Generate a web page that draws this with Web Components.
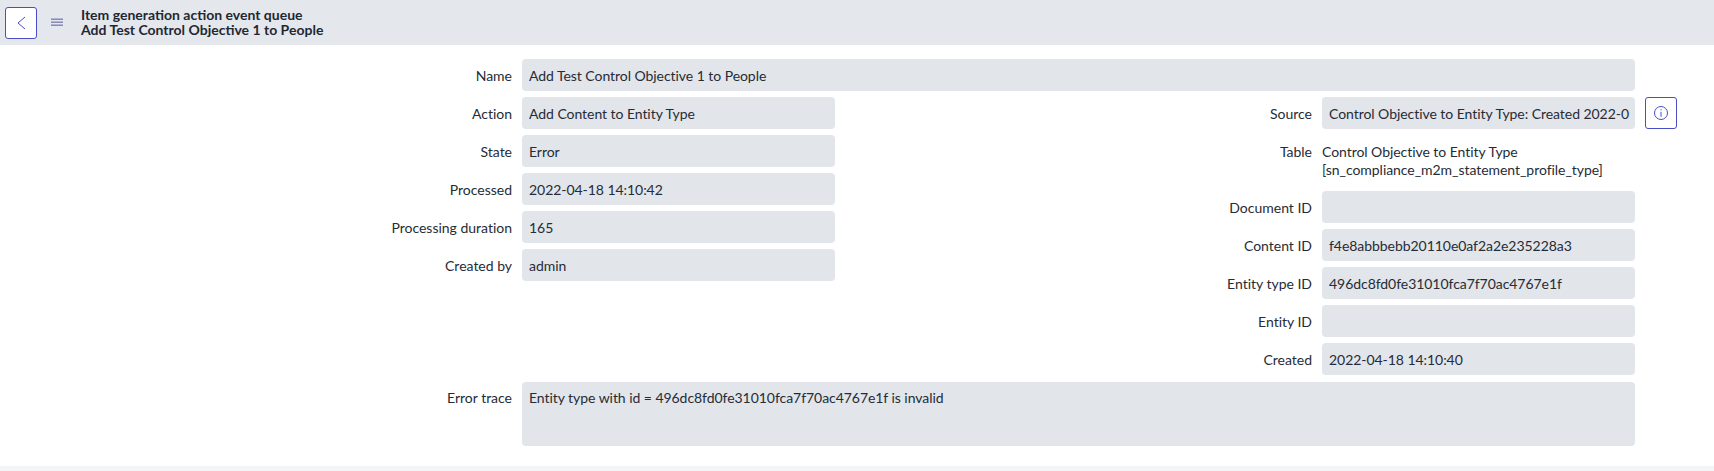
<!DOCTYPE html>
<html>
<head>
<meta charset="utf-8">
<title>Item generation action event queue</title>
<style>
  html, body { margin: 0; padding: 0; background: #f4f5f7; }
  body { font-family: Lato, "Liberation Sans", sans-serif; font-size: 14px; color: #262c36; height: 471px; overflow: hidden; }
</style>
</head>
<body>
<form-page>
  <form-header slot="header" table="Item generation action event queue" record="Add Test Control Objective 1 to People"></form-header>

  <form-field slot="top" label="Name" value="Add Test Control Objective 1 to People"></form-field>

  <form-field slot="left" label="Action" value="Add Content to Entity Type"></form-field>
  <form-field slot="left" label="State" value="Error"></form-field>
  <form-field slot="left" label="Processed" value="2022-04-18 14:10:42"></form-field>
  <form-field slot="left" label="Processing duration" value="165"></form-field>
  <form-field slot="left" label="Created by" value="admin"></form-field>

  <form-field slot="right" label="Source" value="Control Objective to Entity Type: Created 2022-0" action></form-field>
  <form-field slot="right" label="Table" plain>Control Objective to Entity Type<br>[sn_compliance_m2m_statement_profile_type]</form-field>
  <form-field slot="right" label="Document ID" value=""></form-field>
  <form-field slot="right" label="Content ID" value="f4e8abbbebb20110e0af2a2e235228a3"></form-field>
  <form-field slot="right" label="Entity type ID" value="496dc8fd0fe31010fca7f70ac4767e1f"></form-field>
  <form-field slot="right" label="Entity ID" value=""></form-field>
  <form-field slot="right" label="Created" value="2022-04-18 14:10:40"></form-field>

  <form-field slot="bottom" label="Error trace" value="Entity type with id = 496dc8fd0fe31010fca7f70ac4767e1f is invalid" tall></form-field>
</form-page>

<script>
class FormPage extends HTMLElement {
  constructor() {
    super();
    this.attachShadow({mode: 'open'}).innerHTML = `
      <style>
        :host { display: block; }
        .body { background: #fff; height: 421px; box-sizing: border-box; padding: 14px 0 0; }
        .columns { display: grid; grid-template-columns: 835px 842px; }
        .wide { width: 1677px; }
        .bottom { margin-top: 1px; }
      </style>
      <slot name="header"></slot>
      <div class="body">
        <div class="wide"><slot name="top"></slot></div>
        <div class="columns">
          <div class="left"><slot name="left"></slot></div>
          <div class="right"><slot name="right"></slot></div>
        </div>
        <div class="wide bottom"><slot name="bottom"></slot></div>
      </div>
    `;
  }
}
customElements.define('form-page', FormPage);

class FormHeader extends HTMLElement {
  constructor() {
    super();
    this.attachShadow({mode: 'open'});
  }
  connectedCallback() {
    this.shadowRoot.innerHTML = `
      <style>
        :host { display: flex; align-items: center; height: 45px; background: #e4e7eb; box-sizing: border-box; padding-left: 5px; }
        .back { width: 32px; height: 32px; box-sizing: border-box; border: 1px solid #4a4ec4; border-radius: 3px; background: #fff; display: flex; align-items: center; justify-content: center; }
        .menu { display: flex; margin-left: 14px; }
        .titles { margin-left: 18px; margin-top: -1px; font-weight: 700; font-size: 14px; line-height: 15px; color: #1f2733; }
        svg { display: block; }
      </style>
      <div class="back">
        <svg width="16" height="16" viewBox="0 0 16 16" fill="none" stroke="#4a4ec4" stroke-width="1"><path d="M12 2 L5 8 L12 14"/></svg>
      </div>
      <div class="menu">
        <svg width="12" height="10" viewBox="0 0 12 10" fill="#7f82b5"><rect y="0.5" width="12" height="1.4"/><rect y="3.5" width="12" height="1.4"/><rect y="6.5" width="12" height="1.4"/></svg>
      </div>
      <div class="titles">
        <div>${this.getAttribute('table')}</div>
        <div>${this.getAttribute('record')}</div>
      </div>
    `;
  }
}
customElements.define('form-header', FormHeader);

class FormField extends HTMLElement {
  constructor() {
    super();
    this.attachShadow({mode: 'open'});
  }
  connectedCallback() {
    const value = this.getAttribute('value') || '';
    let control = `<div class="input"><div class="text">${value}</div></div>`;
    if (this.hasAttribute('plain')) {
      control = `<div class="plain"><slot></slot></div>`;
    }
    let extra = '<div class="spare"></div>';
    if (this.hasAttribute('action')) {
      extra = `
        <div class="action">
          <svg width="16" height="16" viewBox="0 0 16 16" fill="none" stroke="#4a4ec4" stroke-width="1"><circle cx="8" cy="8" r="6.5"/><path d="M8 6.8v5M8 4.2v1.2"/></svg>
        </div>`;
    }
    const wideRow = this.slot == 'top' || this.slot == 'bottom';
    const leftRow = this.slot == 'left';
    this.shadowRoot.innerHTML = `
      <style>
        :host { display: flex; margin-bottom: 6px; letter-spacing: -0.05px; }
        .label { flex: 1; min-width: 0; height: 32px; text-align: right; padding-right: 10px; letter-spacing: -0.01px; line-height: 34px; white-space: nowrap; }
        .input { ${wideRow ? 'width: 1113px;' : 'width: 313px;'} height: ${this.hasAttribute('tall') ? '64px' : '32px'}; box-sizing: border-box; background: #e2e5ea; border-radius: 4px; padding: 0 3px 0 7px; line-height: 34px; }
        .text { overflow: hidden; white-space: nowrap; }
        .plain { width: 313px; height: 50px; box-sizing: border-box; padding-top: 8px; line-height: 18.4px; white-space: nowrap; }
        .spare { width: ${leftRow ? '0' : '42px'}; }
        .action { width: 32px; height: 32px; margin-left: 10px; box-sizing: border-box; border: 1px solid #4a4ec4; border-radius: 3px; display: flex; align-items: center; justify-content: center; }
        svg { display: block; }
        :host([plain]) .label { height: auto; line-height: 18.4px; padding-top: 8px; }
        :host([tall]) .label, :host([tall]) .input { line-height: 32px; }
      </style>
      <div class="label">${this.getAttribute('label')}</div>
      ${control}
      ${extra}
    `;
  }
}
customElements.define('form-field', FormField);
</script>
</body>
</html>
